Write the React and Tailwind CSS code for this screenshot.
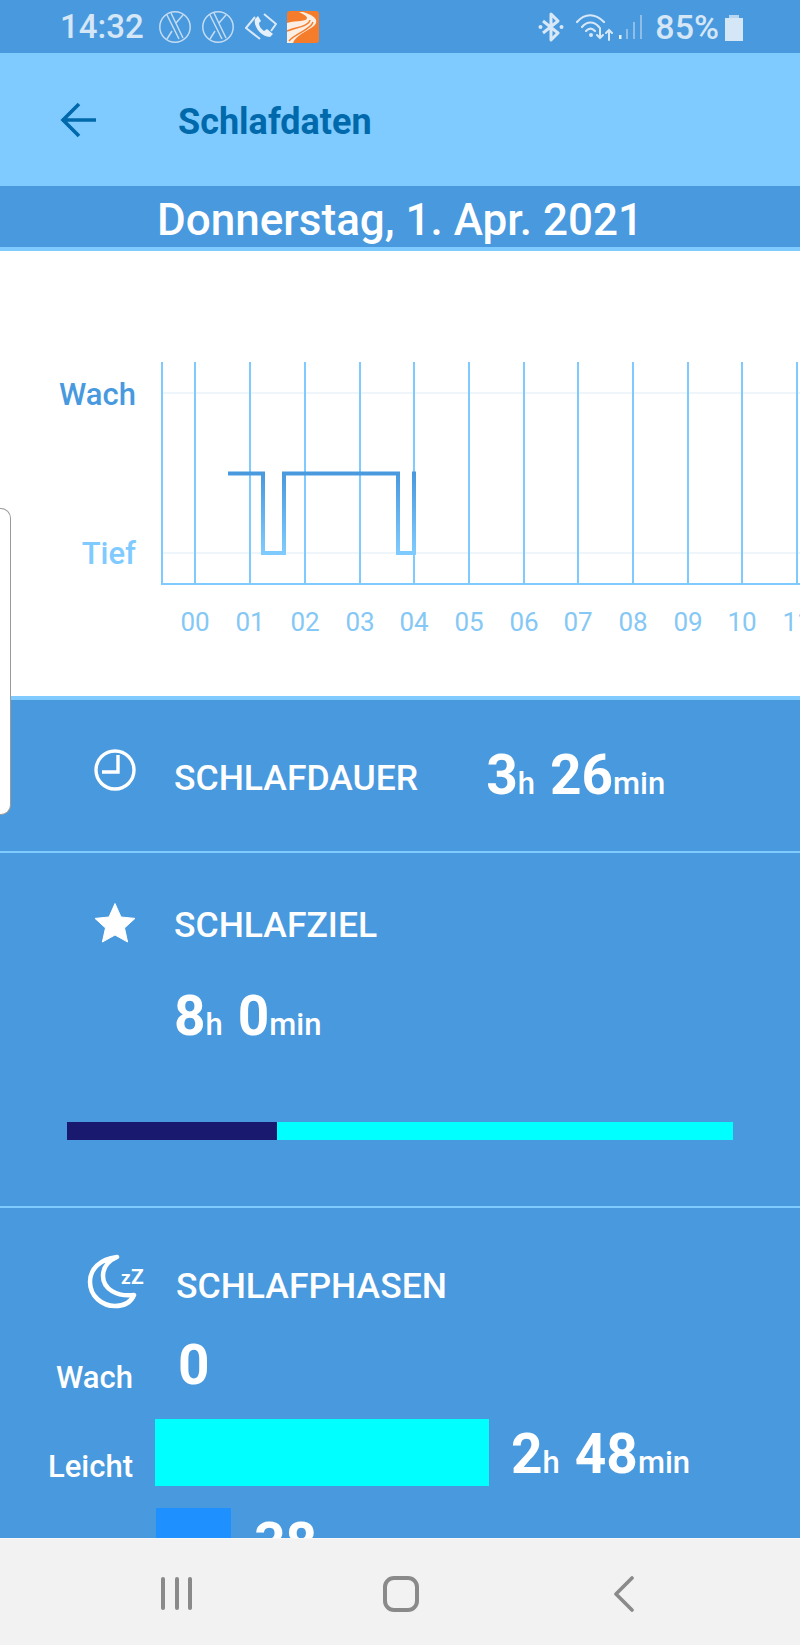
import React from 'react';

const hours = ['00', '01', '02', '03', '04', '05', '06', '07', '08', '09', '10', '11'];
const gridX = [195, 250, 305, 360, 414, 469, 524, 578, 633, 688, 742, 797];

const NoSyncIcon = () => (
  <svg width="34" height="34" viewBox="0 0 34 34" fill="none" stroke="#c4dcf3" strokeWidth="1.5">
    <circle cx="17" cy="17" r="15.2" />
    <path d="M9 5 L21 29 M13 3 L25 28 M25 5 L18 13 M14 21 L9 29" />
  </svg>
);

const PhoneIcon = () => (
  <svg width="34" height="34" viewBox="0 0 34 34" fill="none">
    <path d="M11 7 L2 18 L16 29 M20 4 L32 14 L27 21" stroke="#d8e8f7" strokeWidth="2" strokeLinejoin="round" />
    <path d="M11 9 C9 16 17 27 26 27 L29 24 L23 19 L20 21 C17 19 15 16 15 13 L17 11 L14 6 Z" fill="#e6f0fa" />
  </svg>
);

const RoadIcon = () => (
  <svg width="32" height="32" viewBox="0 0 32 32">
    <rect width="32" height="32" rx="3" fill="#f47c2a" />
    <path d="M0 12 C10 9 20 11 20 7 C20 5 16 3 12 1 L16 1 C22 3 31 6 29 12 C27 18 10 22 6 32 L0 32 Z" fill="#fbeee2" />
    <path d="M0 20 C10 16 22 15 23 9 M2 30 C8 22 24 19 26 11" stroke="#f47c2a" strokeWidth="1.4" fill="none" />
  </svg>
);

const BluetoothIcon = () => (
  <svg width="26" height="30" viewBox="0 0 26 30" fill="none" stroke="#d8e8f7" strokeWidth="3">
    <path d="M5 9 L20 21 L13 28 V2 L20 9 L5 21" strokeLinejoin="round" />
    <circle cx="2.5" cy="15" r="2" fill="#d8e8f7" stroke="none" />
    <circle cx="23.5" cy="15" r="2" fill="#d8e8f7" stroke="none" />
  </svg>
);

const WifiIcon = () => (
  <svg width="38" height="28" viewBox="0 0 38 28" fill="none" stroke="#d8e8f7" strokeWidth="2.2" strokeLinecap="round">
    <path d="M1 9 C9 0 19 0 28 9" />
    <path d="M6 14 C11 8 18 8 23 14" />
    <path d="M10 18 C13 15 16 15 19 18" />
    <circle cx="15" cy="22" r="2" fill="#d8e8f7" stroke="none" />
    <path d="M24 15 V25 M21 22 L24 25 L27 22" strokeWidth="2" />
    <path d="M33 27 V17 M30 20 L33 17 L36 20" strokeWidth="2" />
  </svg>
);

const SignalIcon = () => (
  <svg width="24" height="26" viewBox="0 0 24 26">
    <rect x="0" y="21" width="2.5" height="4" fill="#e6f0fa" />
    <rect x="7" y="15" width="2" height="10" fill="#8fbfe9" />
    <rect x="14" y="8" width="2" height="17" fill="#8fbfe9" />
    <rect x="21" y="1" width="2" height="24" fill="#8fbfe9" />
  </svg>
);

const ClockIcon = () => (
  <svg width="42" height="42" viewBox="0 0 42 42" fill="none" stroke="#fff" strokeWidth="3.4">
    <circle cx="21" cy="21" r="19" />
    <path d="M24 6 V23 H8" />
  </svg>
);

const StarIcon = () => (
  <svg width="42" height="42" viewBox="0 0 42 42" fill="#fff" stroke="#fff" strokeWidth="1" strokeLinejoin="round">
    <path d="M21 1.5 L27 15 L41 16.4 L30.5 26 L33.6 40 L21 33 L8.4 40 L11.5 26 L1 16.4 L15 15 Z" />
  </svg>
);

const MoonIcon = () => (
  <svg width="58" height="56" viewBox="0 0 58 56" fill="none">
    <path d="M31 4 C14 6 4 16 4 29 C4 43 16 53 29 53 C38 53 45 49 48 42 C31 44 17 36 17 23 C17 15 22 8 31 4 Z" stroke="#fff" strokeWidth="4.5" strokeLinejoin="round" />
    <text x="35" y="31" fill="#fff" fontFamily="Roboto" fontWeight="700" fontSize="19">z</text>
    <text x="45" y="31" fill="#fff" fontFamily="Roboto" fontWeight="700" fontSize="21">Z</text>
  </svg>
);

const Duration = ({ parts, className = '' }) => (
  <div className={`flex items-baseline font-bold text-white leading-none ${className}`}>
    {parts.map(([num, unit], i) => (
      <span key={unit} className={i > 0 ? 'ml-[15px]' : ''}>
        <span className="text-[55px]">{num}</span>
        <span className="text-[31px] font-medium">{unit}</span>
      </span>
    ))}
  </div>
);

const SleepChart = () => (
  <svg width="650" height="445" viewBox="150 251 650 445" className="block">
    <defs>
      <linearGradient id="sleepLine" gradientUnits="userSpaceOnUse" x1="0" y1="473" x2="0" y2="553">
        <stop offset="0" stopColor="#4899de" />
        <stop offset="1" stopColor="#7fcbff" />
      </linearGradient>
    </defs>
    <path d="M163 393 H800 M163 553 H800" stroke="#eef5fb" strokeWidth="2" />
    <path d="M162 362 V584 H800" fill="none" stroke="#7fcbff" strokeWidth="2" />
    {gridX.map((x) => (
      <line key={x} x1={x} x2={x} y1="362" y2="584" stroke="#7fcbff" strokeWidth="2" />
    ))}
    <path
      d="M228 473.5 H263 V553 H284 V473.5 H398 V553 H414 V473.5 H416"
      fill="none"
      stroke="url(#sleepLine)"
      strokeWidth="4"
    />
    {hours.map((h, i) => (
      <text key={h} x={gridX[i]} y="631" textAnchor="middle" fontFamily="Roboto" fontSize="26" fill="#85c8f5">
        {h}
      </text>
    ))}
  </svg>
);

export default function App() {
  return (
    <div className="relative w-[800px] h-[1645px] flex flex-col overflow-hidden bg-[#4899de] font-['Roboto',sans-serif]">
      {/* Status bar */}
      <div className="h-[53px] flex items-center pl-[60px] pr-[57px] shrink-0">
        <span className="text-[33px] font-medium text-[#d5e6f6] leading-none mr-[14px]">14:32</span>
        <div className="flex items-center gap-[9px]">
          <NoSyncIcon />
          <NoSyncIcon />
          <PhoneIcon />
          <RoadIcon />
        </div>
        <div className="ml-auto flex items-center">
          <BluetoothIcon />
          <div className="ml-[12px]"><WifiIcon /></div>
          <div className="ml-[5px]"><SignalIcon /></div>
          <span className="ml-[12px] text-[34px] font-medium text-[#d5e6f6] leading-none">85%</span>
          <div className="ml-[6px] mt-[2px] w-[18px] h-[26px] flex flex-col items-center">
            <div className="w-[10px] h-[3px] bg-[#b9d6f0]" />
            <div className="w-[18px] h-[23px] bg-[#d5e6f6]" />
          </div>
        </div>
      </div>

      {/* App bar */}
      <div className="h-[133px] bg-[#7fcbff] flex items-center shrink-0">
        <svg width="38" height="38" viewBox="0 0 38 38" fill="none" stroke="#0069ab" strokeWidth="3.6" className="ml-[59px]">
          <path d="M37 19 H4 M20 3 L4 19 L20 35" />
        </svg>
        <span className="ml-[81px] mt-[4px] text-[36px] font-bold text-[#0069ab] leading-none">Schlafdaten</span>
      </div>

      {/* Date */}
      <div className="h-[61px] flex items-center justify-center shrink-0 text-[44px] font-medium text-white leading-none pt-[6px]">
        Donnerstag, 1. Apr. 2021
      </div>
      <div className="h-[4px] bg-[#7fcbff] shrink-0" />

      {/* Chart */}
      <div className="h-[445px] bg-white flex shrink-0">
        <div className="w-[150px] pr-[14px] flex flex-col items-end text-[31px] font-medium leading-[36px]">
          <span className="mt-[126px] text-[#4899de]">Wach</span>
          <span className="mt-[123px] text-[#7fcbff]">Tief</span>
        </div>
        <SleepChart />
      </div>
      <div className="h-[4px] bg-[#7fcbff] shrink-0" />

      {/* Sections */}
      <div className="flex-1 overflow-hidden text-white">
        <div className="h-[153px] flex items-center border-b-2 border-[#7fcbff]">
          <div className="ml-[94px] mt-[-12px]"><ClockIcon /></div>
          <span className="ml-[38px] mt-[6px] text-[35.5px] font-medium leading-none">SCHLAFDAUER</span>
          <Duration className="ml-[68px]" parts={[['3', 'h'], ['26', 'min']]} />
        </div>

        <div className="h-[355px] border-b-2 border-[#7fcbff] flex flex-col">
          <div className="flex items-start mt-[49px]">
            <div className="ml-[94px]"><StarIcon /></div>
            <span className="ml-[38px] mt-[6px] text-[35.5px] font-medium leading-none">SCHLAFZIEL</span>
          </div>
          <Duration className="ml-[174px] mt-[45px]" parts={[['8', 'h'], ['0', 'min']]} />
          <div className="ml-[67px] mt-[78px] w-[666px] h-[18px] flex">
            <div className="w-[210px] bg-[#191970]" />
            <div className="flex-1 bg-[#00ffff]" />
          </div>
        </div>

        <div className="flex flex-col">
          <div className="flex items-center mt-[45px]">
            <div className="ml-[86px]"><MoonIcon /></div>
            <span className="ml-[32px] mt-[12px] text-[35.5px] font-medium leading-none">SCHLAFPHASEN</span>
          </div>
          <div className="flex items-start mt-[29px] h-[81px]">
            <span className="w-[133px] mt-[24px] text-right text-[31px] font-medium leading-none">Wach</span>
            <span className="ml-[45px] text-[55px] font-bold leading-none">0</span>
          </div>
          <div className="flex items-start h-[67px]">
            <span className="w-[133px] mt-[32px] text-right text-[31px] font-medium leading-none">Leicht</span>
            <div className="ml-[22px] w-[334px] h-[67px] bg-[#00ffff]" />
            <Duration className="ml-[22px] mt-[8px]" parts={[['2', 'h'], ['48', 'min']]} />
          </div>
          <div className="flex items-start mt-[22px] ml-[156px]">
            <div className="w-[75px] h-[67px] bg-[#1e90ff]" />
            <Duration className="ml-[23px] mt-[8px]" parts={[['38', 'min']]} />
          </div>
        </div>
      </div>

      {/* Navigation bar */}
      <div className="h-[107px] bg-[#f2f2f2] border-t border-[#f8f8f8] shrink-0 flex items-center">
        <div className="ml-[161px] mt-[3px] flex gap-[9.5px]">
          <div className="w-[4px] h-[33px] rounded-full bg-[#8a8a8a]" />
          <div className="w-[4px] h-[33px] rounded-full bg-[#8a8a8a]" />
          <div className="w-[4px] h-[33px] rounded-full bg-[#8a8a8a]" />
        </div>
        <div className="ml-[191px] mt-[3px] w-[36px] h-[36px] rounded-[11px] border-[4px] border-[#8a8a8a]" />
        <svg width="24" height="36" viewBox="0 0 24 36" fill="none" stroke="#8a8a8a" strokeWidth="3.6" strokeLinecap="round" strokeLinejoin="round" className="ml-[193px] mt-[3px]">
          <path d="M20 2 L4 18 L20 34" />
        </svg>
      </div>

      {/* Side tab */}
      <div className="absolute left-0 top-[508px] w-[11px] h-[307px] bg-white border border-l-0 border-[#9a9a9a] rounded-r-[10px]" />
    </div>
  );
}
